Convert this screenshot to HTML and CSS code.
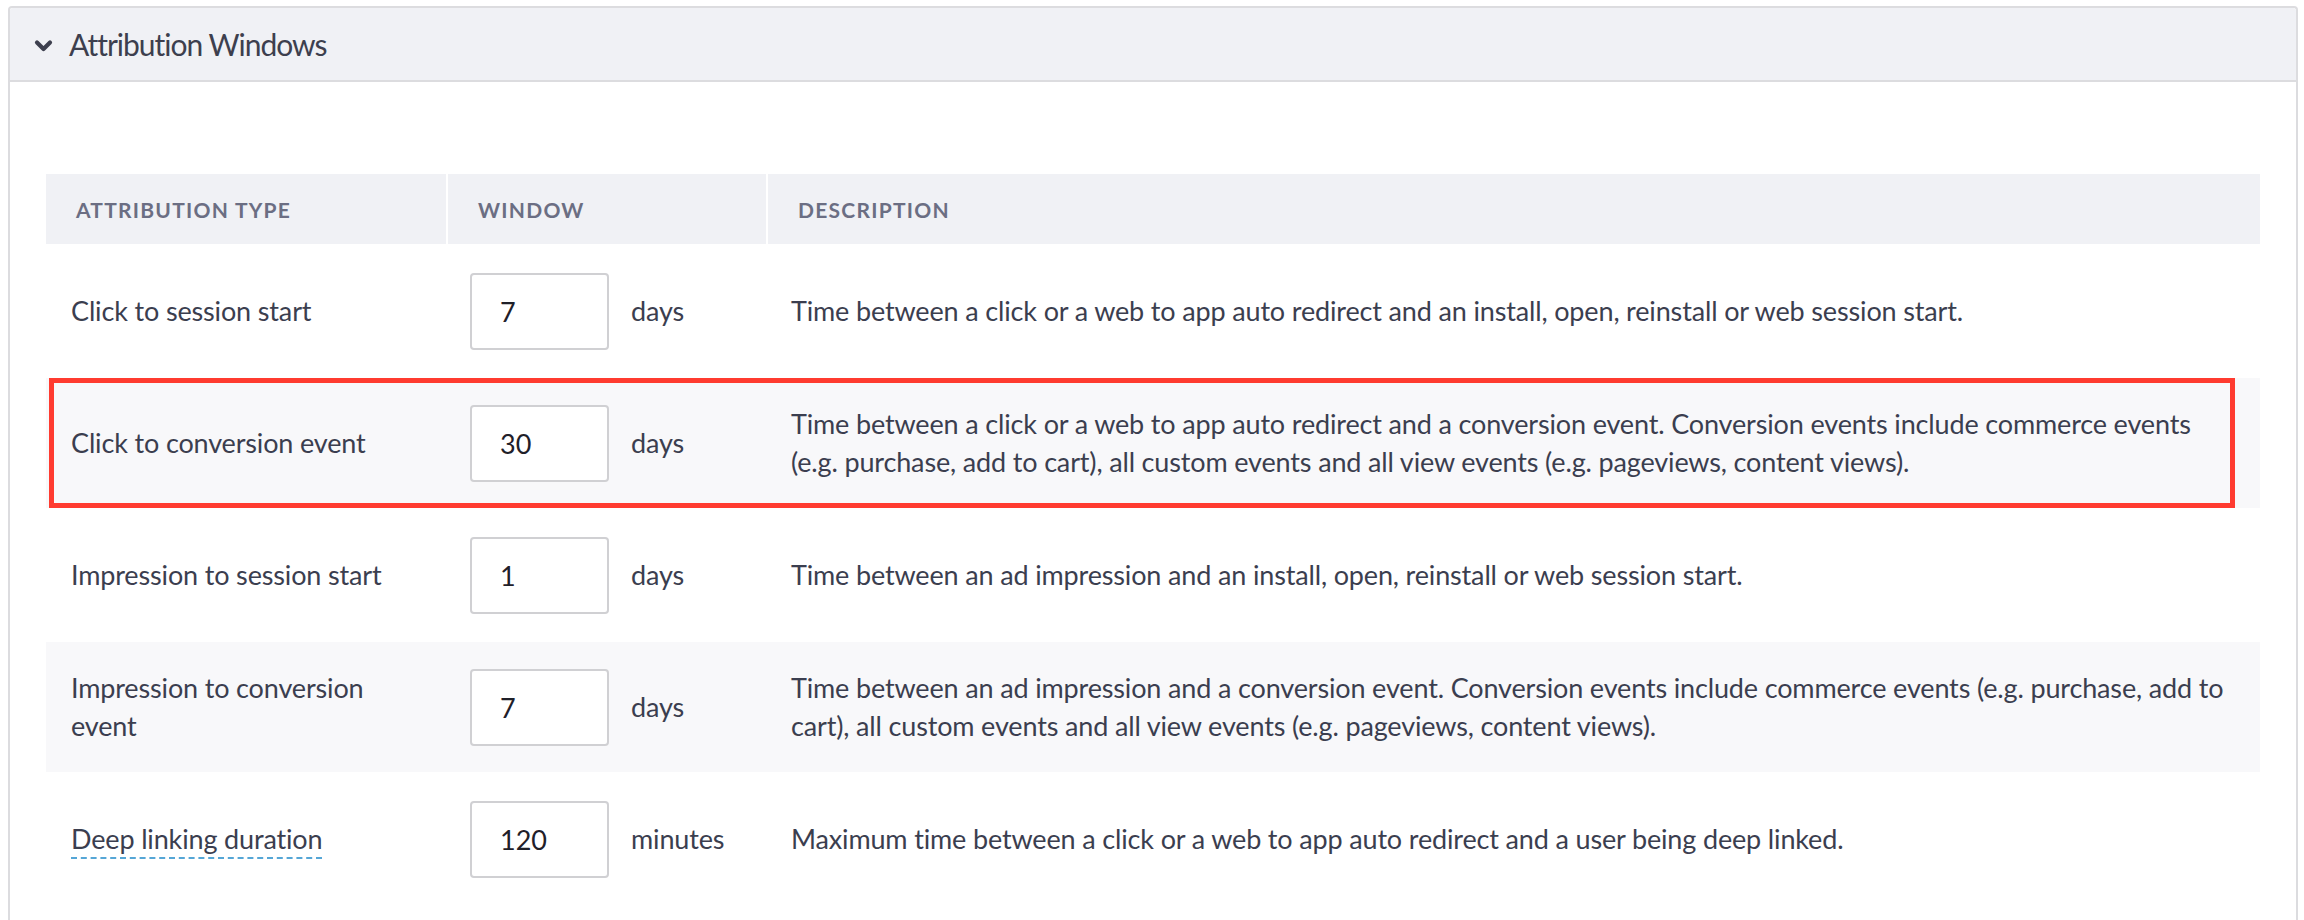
FILE: index.html
```html
<!DOCTYPE html>
<html lang="en">
<head>
<meta charset="utf-8">
<title>Attribution Windows</title>
<link rel="stylesheet" href="styles.css">
</head>
<body>
<section class="panel">
  <header class="panel-head">
    <svg class="chev" width="19" height="14" viewBox="0 0 19 14" aria-hidden="true">
      <path d="M3 3.5 L9.5 10 L16 3.5" fill="none" stroke="#3d3f4e" stroke-width="4.2" stroke-linecap="round" stroke-linejoin="round"/>
    </svg>
    <h2 class="title">Attribution Windows</h2>
  </header>
  <div class="panel-body">
    <div class="table">
      <div class="thead">
        <div class="th">Attribution Type</div>
        <div class="th">Window</div>
        <div class="th">Description</div>
      </div>
      <div class="rows">
        <div class="tr">
          <div class="td label">Click to session start</div>
          <div class="td win"><input class="num" type="text" value="7" readonly><span class="unit">days</span></div>
          <div class="td desc">Time between a click or a web to app auto redirect and an install, open, reinstall or web session start.</div>
        </div>
        <div class="tr alt highlighted">
          <div class="td label">Click to conversion event</div>
          <div class="td win"><input class="num" type="text" value="30" readonly><span class="unit">days</span></div>
          <div class="td desc">Time between a click or a web to app auto redirect and a conversion event. Conversion events include commerce events (e.g. purchase, add to cart), all custom events and all view events (e.g. pageviews, content views).</div>
          <div class="mark"></div>
        </div>
        <div class="tr">
          <div class="td label">Impression to session start</div>
          <div class="td win"><input class="num" type="text" value="1" readonly><span class="unit">days</span></div>
          <div class="td desc">Time between an ad impression and an install, open, reinstall or web session start.</div>
        </div>
        <div class="tr alt">
          <div class="td label">Impression to conversion event</div>
          <div class="td win"><input class="num" type="text" value="7" readonly><span class="unit">days</span></div>
          <div class="td desc">Time between an ad impression and a conversion event. Conversion events include commerce events (e.g. purchase, add to cart), all custom events and all view events (e.g. pageviews, content views).</div>
        </div>
        <div class="tr">
          <div class="td label"><span class="dashed">Deep linking duration</span></div>
          <div class="td win"><input class="num" type="text" value="120" readonly><span class="unit">minutes</span></div>
          <div class="td desc">Maximum time between a click or a web to app auto redirect and a user being deep linked.</div>
        </div>
      </div>
    </div>
  </div>
</section>
</body>
</html>
```
FILE: styles.css
```css
html, body {
  background: #ffffff;
}
body {
  margin: 6px 6px 0 8px;
  font-family: "Lato", "Open Sans", sans-serif;
  color: #3b3e4f;
  font-size: 27px;
  letter-spacing: -0.15px;
}
.panel {
  border: 2px solid #dcdcdf;
  border-bottom: none;
  border-radius: 4px 4px 0 0;
  min-height: 1000px;
}
.panel-head {
  height: 72px;
  background: #f0f1f5;
  border-bottom: 2px solid #dcdcdf;
  display: flex;
  align-items: center;
  padding-left: 24px;
  gap: 16px;
  border-radius: 3px 3px 0 0;
}
.chev {
  display: block;
  margin-top: 4px;
}
.title {
  margin: 0;
  font-size: 30px;
  font-weight: 400;
  letter-spacing: -1px;
  color: #3d3f4e;
}
.panel-body {
  padding: 92px 36px 40px;
}
.thead,
.tr {
  display: grid;
  grid-template-columns: 400px 318px 1fr;
  column-gap: 2px;
}
.thead {
  height: 70px;
}
.th {
  background: #f0f1f5;
  display: flex;
  align-items: center;
  padding-left: 30px;
  font-weight: 700;
  font-size: 21px;
  letter-spacing: 1.25px;
  text-transform: uppercase;
  color: #6b6e83;
}
.rows {
  display: flex;
  flex-direction: column;
  gap: 2px;
  margin-top: 2px;
}
.tr {
  height: 130px;
  align-items: center;
  position: relative;
}
.tr.alt {
  background: #f8f8fa;
}
.td {
  line-height: 38px;
}
.label {
  padding: 0 25px;
}
.win {
  display: flex;
  align-items: center;
  gap: 22px;
  padding-left: 22px;
}
.num {
  width: 139px;
  height: 77px;
  box-sizing: border-box;
  border: 2px solid #d0d0d3;
  border-radius: 4px;
  padding: 0 0 0 28px;
  margin: 0;
  background: #fff;
  font-family: "Lato", "Open Sans", sans-serif;
  font-size: 27px;
  color: #1f2029;
  outline: none;
}
.desc {
  padding: 0 24px 0 23px;
}
.dashed {
  border-bottom: 2px dashed #55a6d6;
  padding-bottom: 2px;
}
.mark {
  position: absolute;
  left: 3px;
  top: 0;
  width: 2186px;
  height: 130px;
  box-sizing: border-box;
  border: 5px solid #ff3b30;
  pointer-events: none;
}
```
